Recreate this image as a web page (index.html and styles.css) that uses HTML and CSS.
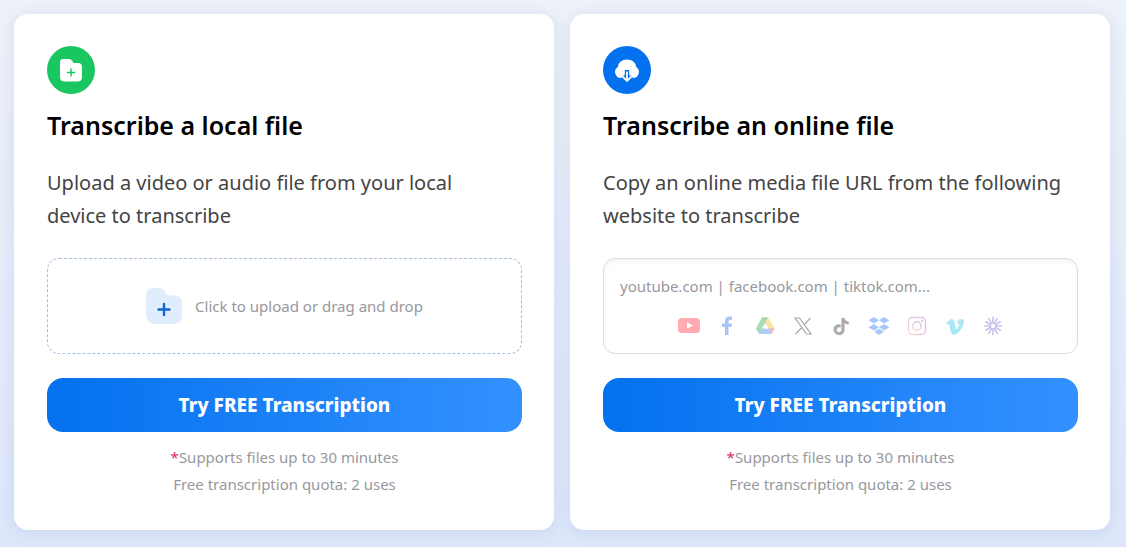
FILE: index.html
```html
<!DOCTYPE html>
<html lang="en">
<head>
    <meta charset="UTF-8">
    <meta name="viewport" content="width=device-width, initial-scale=1.0">
    <title>Free Transcription</title>
    <link rel="stylesheet" href="styles.css">
</head>
<body>
    <main class="container">
        <section class="card">
            <svg class="badge" viewBox="0 0 48 48" aria-hidden="true">
                <circle cx="24" cy="24" r="24" fill="#19c65f"/>
                <path d="M16 13h6q2 0 3 1.500L26.500 17H31q4 0 4 4v10q0 4.500-4.500 4.500h-13Q13 35.500 13 31V16q0-3 3-3z" fill="#fff"/>
                <path d="M24 23v7M20.500 26.500h7" stroke="#19c65f" stroke-width="1.500" stroke-linecap="round"/>
            </svg>
            <h2 class="title">Transcribe a local file</h2>
            <p class="desc">Upload a video or audio file from your local device to transcribe</p>
            <label class="box upload" for="file">
                <input class="file-input" type="file" id="file">
                <svg class="folder" viewBox="0 0 36 36" aria-hidden="true">
                    <path d="M8 0h5q4 0 6 4l1 2q1 1.500 3 1.500h5q8 0 8 8V27q0 9-9 9H10Q0 36 0 26V8q0-8 8-8z" fill="#dfedfd"/>
                    <path d="M18 16v11M12.500 21.500h11" stroke="#0c68d8" stroke-width="2.400" stroke-linecap="round"/>
                </svg>
                <span>Click to upload or drag and drop</span>
            </label>
            <button class="btn" type="button">Try FREE Transcription</button>
            <p class="note"><span class="star">*</span>Supports files up to 30 minutes<br>Free transcription quota: 2 uses</p>
        </section>

        <section class="card">
            <svg class="badge" viewBox="0 0 48 48" aria-hidden="true">
                <circle cx="24" cy="24" r="24" fill="#0471ef"/>
                <path d="M18 32a6 6 0 0 1-3.200-11q1.200-7.500 9.200-7.500T33.200 21A6 6 0 0 1 30 32z" fill="#fff"/>
                <path d="M24 24v11M19.500 30.500l4.500 4.500 4.500-4.500" fill="none" stroke="#0471ef" stroke-width="4.400"/>
                <path d="M24 25.500v9.500M19.500 30.500l4.500 4.500 4.500-4.500" fill="none" stroke="#fff" stroke-width="1.800"/>
            </svg>
            <h2 class="title">Transcribe an online file</h2>
            <p class="desc">Copy an online media file URL from the following website to transcribe</p>
            <div class="box link">
                <input class="url-input" type="text" aria-label="Media file URL" placeholder="youtube.com | facebook.com | tiktok.com...">
                <div class="sites">
                    <!-- YouTube -->
                    <svg class="site" viewBox="0 0 22 22">
                        <rect y="3" width="22" height="15" rx="4" fill="#ffabb0"/>
                        <path d="M9 7.500l6 3-6 3z" fill="#fff"/>
                    </svg>
                    <!-- Facebook -->
                    <svg class="site" viewBox="0 0 22 22">
                        <path d="M9 20v-8H6V8.500h3V6q0-4.500 4.500-4.500H16V5h-2q-1.500 0-1.500 1.500v2H16l-.5 3.500h-3v8z" fill="#a6c6f8"/>
                    </svg>
                    <!-- Google Drive -->
                    <svg class="site" viewBox="0 0 22 22">
                        <path d="M8 2.500h3L14 8l-6.500 11H5l-3-5.500z" fill="#a6dcb8"/>
                        <path d="M8 2.500h6l6.500 11h-6z" fill="#fbe3a0"/>
                        <path d="M8 2.500h6l-3 5z" fill="#9ed4ae"/>
                        <path d="M8 13.500h12.500l-3 5.500H5z" fill="#adcdfb"/>
                        <path d="M20.500 13.500l-3 5.500-3-5.500z" fill="#f8b5b3"/>
                        <path d="M11 8l3.200 5.500H7.800z" fill="#fff"/>
                    </svg>
                    <!-- X -->
                    <svg class="site" viewBox="0 0 22 22" fill="none" stroke="#a8a8a8" stroke-width="1.200">
                        <path d="M3 3h4.500l11.500 16h-4.500zM18.500 3l-6.800 7.200M9.800 12.500L3.500 19"/>
                    </svg>
                    <!-- TikTok -->
                    <svg class="site" viewBox="0 0 22 22" fill="none" stroke-width="2.600">
                        <path d="M10 10.500a4 4 0 1 0 2.500 4V3q.5 4 5.500 4.500" stroke="#c5e6e8"/>
                        <path d="M11 11.500a3.800 3.800 0 1 0 2.500 4V4q.5 4 5.500 4.500" stroke="#f1ccd3"/>
                        <path d="M10.500 11a4 4 0 1 0 2.500 4V3q.5 4.500 5.500 5" stroke="#a9a9ae"/>
                    </svg>
                    <!-- Dropbox -->
                    <svg class="site" viewBox="0 0 22 22" fill="#a9c8f9">
                        <path d="M6 2l5 3.300-5 3.300-5.500-3.300zM16 2l5.500 3.300L16 8.600l-5-3.300zM6 9l5 3.300-5 3.300-5.500-3.300zM16 9l5.500 3.300-5.500 3.300-5-3.300zM11 13.500l4.800 3.200L11 20l-4.800-3.300z"/>
                    </svg>
                    <!-- Instagram -->
                    <svg class="site" viewBox="0 0 22 22" fill="none" stroke="url(#insta)" stroke-width="1.400">
                        <defs>
                            <linearGradient id="insta" x1="1" y1="0" x2="0" y2="1">
                                <stop offset="0" stop-color="#d5c2ea"/>
                                <stop offset=".5" stop-color="#eac8d8"/>
                                <stop offset="1" stop-color="#f8dccd"/>
                            </linearGradient>
                        </defs>
                        <rect x="2.500" y="2.500" width="17" height="17" rx="4"/>
                        <circle cx="11" cy="11" r="4.200"/>
                        <circle cx="16" cy="6" r=".6"/>
                    </svg>
                    <!-- Vimeo -->
                    <svg class="site" viewBox="0 0 22 22">
                        <path d="M2 8l4.500-3.500q3-1.500 4 2.500l1.200 6q.6 2 1.800.2 2.200-3.200 1.500-4.500-.6-.9-2.200-.2 1.200-4.700 5-4.500 3.200.3 2 4.500-2 6.500-7.300 10.500-4.500 2.500-6-3L5 9.500q-.4-1.200-2.200 0z" fill="#a9e8f8"/>
                    </svg>
                    <!-- Loom -->
                    <svg class="site" viewBox="0 0 22 22" fill="none" stroke="#c9c6ec" stroke-width="1.700" stroke-linecap="round">
                        <path d="M11 2.500v5M11 14.500v5M2.500 11h5M14.500 11h5M6.800 3.700l2.400 4.200M12.800 14.100l2.400 4.200M3.700 6.800l4.200 2.400M14.100 12.800l4.200 2.400M15.200 3.700l-2.400 4.200M9.200 14.100l-2.400 4.200M18.300 6.800l-4.200 2.400M7.900 12.800l-4.200 2.400"/>
                        <circle cx="11" cy="11" r="3"/>
                    </svg>
                </div>
            </div>
            <button class="btn" type="button">Try FREE Transcription</button>
            <p class="note"><span class="star">*</span>Supports files up to 30 minutes<br>Free transcription quota: 2 uses</p>
        </section>
    </main>
</body>
</html>
```
FILE: styles.css
```css
*{
    box-sizing: border-box;
}
body{
    margin: 0;
    padding: 14px 16px 17px 14px;
    min-height: 100vh;
    background: linear-gradient(#edf1f9, #dde7fb);
    font-family: "Noto Sans", "Open Sans", sans-serif;
}
.container{
    display: grid;
    grid-template-columns: 1fr 1fr;
    gap: 16px;
}
.card{
    padding: 32px 32px 32px 33px;
    background-color: #fff;
    border-radius: 14px;
    box-shadow: 0 2px 16px rgba(60, 90, 160, 0.12);
}
.badge{
    display: block;
    width: 48px;
    height: 48px;
}
.title{
    margin: 13px 0 23px;
    font-size: 25px;
    line-height: 36px;
    font-weight: 600;
    color: #000;
}
.desc{
    margin: 0 0 26px;
    padding-right: 8px;
    font-size: 20px;
    line-height: 33px;
    color: #444;
}
.box{
    display: flex;
    height: 96px;
    border-radius: 12px;
    font-size: 15px;
    color: #98989e;
}
.upload{
    position: relative;
    align-items: center;
    justify-content: center;
    gap: 13px;
    border: 1px dashed #a3bfdc;
    cursor: pointer;
}
.file-input{
    position: absolute;
    inset: 0;
    opacity: 0;
    cursor: pointer;
}
.folder{
    width: 36px;
    height: 36px;
}
.link{
    flex-direction: column;
    padding: 16px;
    border: 1px solid #dedee0;
    box-shadow: inset 0 3px 5px rgba(0, 0, 0, 0.04);
}
.url-input{
    width: 100%;
    height: 22px;
    padding: 0;
    border: 0;
    outline: 0;
    background: none;
    font: inherit;
    color: #444;
}
.url-input::placeholder{
    color: #98989e;
}
.sites{
    display: flex;
    justify-content: center;
    gap: 16px;
    margin-top: 18px;
}
.site{
    width: 22px;
    height: 22px;
}
.btn{
    display: block;
    width: 100%;
    height: 54px;
    margin: 24px 0 12px;
    padding: 0;
    border: 0;
    border-radius: 16px;
    background: linear-gradient(90deg, #0471ef, #3391ff);
    font-family: inherit;
    font-size: 19px;
    font-weight: 800;
    color: #fff;
    cursor: pointer;
}
.note{
    margin: 0;
    font-size: 15px;
    line-height: 27px;
    text-align: center;
    color: #98989e;
}
.star{
    color: #d9265f;
}
```
